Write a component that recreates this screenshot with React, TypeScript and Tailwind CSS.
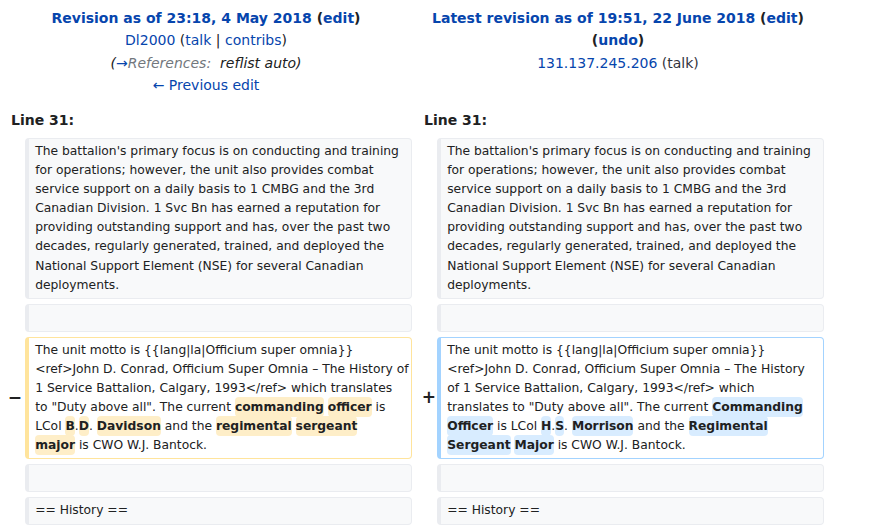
import { Fragment, type ReactNode } from 'react';

type Kind = 'context' | 'deleted' | 'added';

const BOX: Record<Kind, string> = {
  context: 'border-[#eaecf0] bg-[#f8f9fa]',
  deleted: 'border-[#ffe49c] bg-white',
  added: 'border-[#a3d3ff] bg-white',
};

const PARA_LINES = [
  "The battalion's primary focus is on conducting and training",
  'for operations; however, the unit also provides combat',
  'service support on a daily basis to 1 CMBG and the 3rd',
  'Canadian Division. 1 Svc Bn has earned a reputation for',
  'providing outstanding support and has, over the past two',
  'decades, regularly generated, trained, and deployed the',
  'National Support Element (NSE) for several Canadian',
  'deployments.',
];

function Del({ children }: { children: ReactNode }) {
  return <span className="rounded-[0.33em] bg-[#feeec8] py-[0.25em] font-bold">{children}</span>;
}

function Add({ children }: { children: ReactNode }) {
  return <span className="rounded-[0.33em] bg-[#d8ecff] py-[0.25em] font-bold">{children}</span>;
}

const DELETED_LINES: ReactNode[] = [
  'The unit motto is {{lang|la|Officium super omnia}}',
  '<ref>John D. Conrad, Officium Super Omnia – The History of',
  '1 Service Battalion, Calgary, 1993</ref> which translates',
  <>
    to "Duty above all". The current <Del>commanding</Del> <Del>officer</Del> is
  </>,
  <>
    LCol <Del>B</Del>.<Del>D</Del>. <Del>Davidson</Del> and the <Del>regimental</Del> <Del>sergeant</Del>
  </>,
  <>
    <Del>major</Del> is CWO W.J. Bantock.
  </>,
];

const ADDED_LINES: ReactNode[] = [
  'The unit motto is {{lang|la|Officium super omnia}}',
  '<ref>John D. Conrad, Officium Super Omnia – The History',
  'of 1 Service Battalion, Calgary, 1993</ref> which',
  <>
    translates to "Duty above all". The current <Add>Commanding</Add>
  </>,
  <>
    <Add>Officer</Add> is LCol <Add>H</Add>.<Add>S</Add>. <Add>Morrison</Add> and the <Add>Regimental</Add>
  </>,
  <>
    <Add>Sergeant</Add> <Add>Major</Add> is CWO W.J. Bantock.
  </>,
];

function Cell({ kind = 'context', lines }: { kind?: Kind; lines?: ReactNode[] }) {
  return (
    <div
      className={`whitespace-nowrap rounded-[4px] border border-l-4 px-[6.2px] py-[3.3px] text-[12.3px] leading-[19.05px] text-[#202122] ${BOX[kind]}`}
    >
      {lines
        ? lines.map((line, i) => (
            <Fragment key={i}>
              {i > 0 && <br />}
              {line}
            </Fragment>
          ))
        : '\u00a0'}
    </div>
  );
}

function Marker({ sign, right }: { sign?: string; right?: boolean }) {
  return (
    <div
      className={`flex items-center justify-end text-[17px] font-bold text-[#202122] ${right ? 'pr-[1px]' : 'pr-[3px]'}`}
    >
      {sign}
    </div>
  );
}

export default function App() {
  return (
    <div
      className="w-[874px] bg-white text-[14px] leading-[1.6] text-[#202122]"
      style={{ fontFamily: '"DejaVu Sans", sans-serif' }}
    >
      <div className="w-[824px]">
        <div className="grid grid-cols-2 pt-[7px] text-center">
          <div>
            <div className="font-bold">
              <a className="text-[#0645ad]">Revision as of 23:18, 4 May 2018</a> (
              <a className="text-[#0645ad]">edit</a>)
            </div>
            <div>
              <a className="text-[#0645ad]">Dl2000</a> (<a className="text-[#0645ad]">talk</a> |{' '}
              <a className="text-[#0645ad]">contribs</a>)
            </div>
            <div className="italic">
              (<a className="text-[#0645ad]">→</a>
              <span className="text-[#72777d]">References:&nbsp; </span>reflist auto)
            </div>
            <div>
              <a className="text-[#0645ad]">← Previous edit</a>
            </div>
          </div>
          <div>
            <div className="font-bold">
              <a className="text-[#0645ad]">Latest revision as of 19:51, 22 June 2018</a> (
              <a className="text-[#0645ad]">edit</a>)
            </div>
            <div className="font-bold">
              (<a className="text-[#0645ad]">undo</a>)
            </div>
            <div>
              <a className="text-[#0645ad]">131.137.245.206</a>{' '}
              <span className="text-[#33333d]">(talk)</span>
            </div>
          </div>
        </div>

        <div className="mt-[12px] grid grid-cols-2 font-bold">
          <div className="pl-[11px]">Line 31:</div>
          <div className="pl-[12px]">Line 31:</div>
        </div>

        <div className="mt-[7px] grid grid-cols-[25px_387px_25px_387px] gap-y-[5px]">
          <Marker />
          <Cell lines={PARA_LINES} />
          <Marker right />
          <Cell lines={PARA_LINES} />

          <Marker />
          <Cell />
          <Marker right />
          <Cell />

          <Marker sign="−" />
          <Cell kind="deleted" lines={DELETED_LINES} />
          <Marker sign="+" right />
          <Cell kind="added" lines={ADDED_LINES} />

          <Marker />
          <Cell />
          <Marker right />
          <Cell />

          <Marker />
          <Cell lines={['== History ==']} />
          <Marker right />
          <Cell lines={['== History ==']} />
        </div>
      </div>
    </div>
  );
}
